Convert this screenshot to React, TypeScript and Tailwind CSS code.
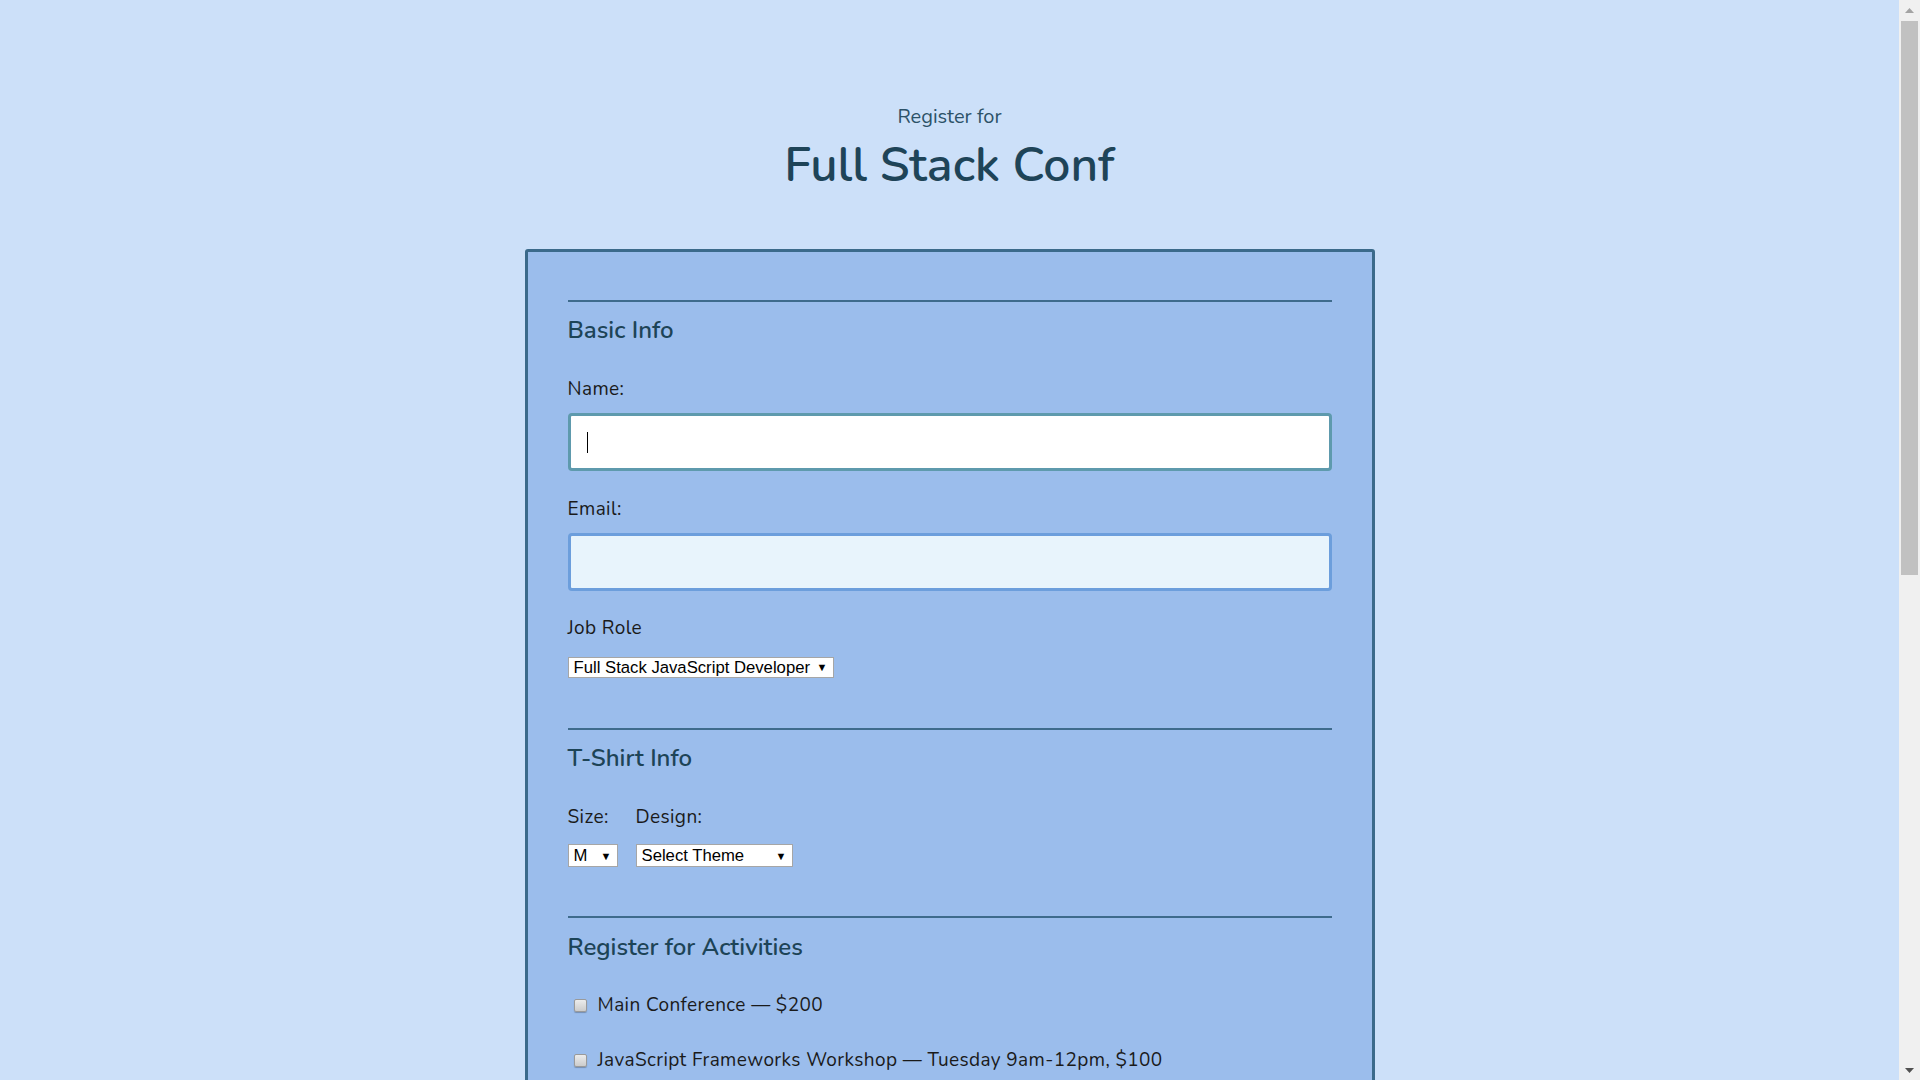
import React from "react";

const font = { fontFamily: '"Nunito", "Lato", "Open Sans", sans-serif' };

function Select({ width, options }: { width: string; options: string[] }) {
  return (
    <div className={`relative inline-block ${width}`}>
      <select
        className="appearance-none w-full h-full bg-white border border-[#a6a6a6] pl-[5px] pr-[16px] text-[16.7px] leading-[19px] text-black outline-none"
        style={{ fontFamily: '"Liberation Sans", Arial, sans-serif' }}
        defaultValue={options[0]}
      >
        {options.map((o) => (
          <option key={o}>{o}</option>
        ))}
      </select>
      {/* arrow glyph */}
      <span className="pointer-events-none absolute right-[6px] top-1/2 -translate-y-1/2 text-[11px] leading-none text-black">▼</span>
    </div>
  );
}

function Checkbox() {
  return (
    <span className="inline-block w-[13px] h-[13px] rounded-[2px] border border-[#9a9a9a] bg-gradient-to-b from-[#ececec] to-[#cccccc] shadow-[0_1px_1px_rgba(0,0,0,0.25)] shrink-0" />
  );
}

// fake window scrollbar, as in the screenshot
function Scrollbar() {
  return (
    <div className="fixed right-0 top-0 h-screen w-[21px] bg-[#f0f0f0] flex flex-col items-center">
      <div className="h-[20px] w-full flex items-center justify-center">
        <svg width="9" height="5" viewBox="0 0 9 5">
          <path d="M4.5 0 L9 5 L0 5 Z" fill="#a3a3a3" />
        </svg>
      </div>
      <div className="mt-px h-[554px] w-[17px] bg-[#c1c1c1]" />
      <div className="flex-1" />
      <div className="h-[20px] w-full flex items-center justify-center">
        <svg width="9" height="5" viewBox="0 0 9 5">
          <path d="M0 0 L9 0 L4.5 5 Z" fill="#505050" />
        </svg>
      </div>
    </div>
  );
}

const labelCls = "block text-[19px] leading-[24px] tracking-[0.4px] text-[#1a1a1a]";
const headCls = "text-[24px] leading-[30px] font-semibold text-[#1d4457]";
const hrCls = "border-0 border-t-2 border-[#3e6b8c]";

const activities = [
  "Main Conference — $200",
  "JavaScript Frameworks Workshop — Tuesday 9am-12pm, $100",
  "JavaScript Libraries Workshop — Tuesday 1pm-4pm, $100",
  "Express Workshop — Tuesday 9am-12pm, $100",
  "Node.js Workshop — Tuesday 1pm-4pm, $100",
  "Build tools Workshop — Wednesday 9am-12pm, $100",
  "npm Workshop — Wednesday 1pm-4pm, $100",
];

export default function App() {
  return (
    <div className="min-h-screen bg-[#cce0f9]" style={font}>
      <div className="mr-[21px] pb-[80px]">
        {/* Header */}
        <header className="pt-[105px] text-center text-[#1e4458]">
          <p className="text-[20px] leading-[24px] text-[#2c5268]">Register for</p>
          <h1 className="mt-[8px] text-[48px] leading-[56px] font-semibold">Full Stack Conf</h1>
        </header>

        {/* Form */}
        <form className="mx-auto mt-[56px] w-[850px] rounded-[3px] border-[3px] border-[#3b6a8b] bg-[#9bbdec] px-[40px] pt-[48px] pb-[60px]">
          {/* Basic Info */}
          <hr className={hrCls} />
          <h2 className={`mt-[13px] ${headCls}`}>Basic Info</h2>

          <label className={`mt-[32px] ${labelCls}`}>Name:</label>
          <div className="mt-[12px] h-[58px] rounded-[4px] border-[3px] border-[#5e9aad] bg-white flex items-center px-[16px]">
            <span className="w-px h-[21px] bg-black" />
          </div>

          <label className={`mt-[26px] ${labelCls}`}>Email:</label>
          <input
            type="email"
            className="mt-[12px] block w-full h-[58px] rounded-[4px] border-[3px] border-[#6c9edc] bg-[#e8f4fc] px-[16px] outline-none"
          />

          <label className={`mt-[25px] ${labelCls}`}>Job Role</label>
          <div className="mt-[16px] flex">
            <Select
              width="w-[266px] h-[21px]"
              options={["Full Stack JavaScript Developer", "Front End Developer", "Back End Developer", "Designer", "Student", "Other"]}
            />
          </div>

          {/* T-Shirt Info */}
          <hr className={`mt-[51px] ${hrCls}`} />
          <h2 className={`mt-[13px] ${headCls}`}>T-Shirt Info</h2>

          <div className="mt-[32px] flex gap-[18px]">
            <div className="flex flex-col">
              <label className={labelCls}>Size:</label>
              <div className="mt-[15px] flex">
                <Select width="w-[50px] h-[23px]" options={["M", "S", "L", "XL"]} />
              </div>
            </div>
            <div className="flex flex-col">
              <label className={labelCls}>Design:</label>
              <div className="mt-[15px] flex">
                <Select width="w-[157px] h-[23px]" options={["Select Theme", "Theme - JS Puns", "Theme - I ♥ JS"]} />
              </div>
            </div>
          </div>

          {/* Activities */}
          <hr className={`mt-[49px] ${hrCls}`} />
          <h2 className={`mt-[14px] ${headCls}`}>Register for Activities</h2>

          <div className="mt-[31px] flex flex-col gap-[31px]">
            {activities.map((a) => (
              <label key={a} className="flex items-center gap-[11px] pl-[6px] text-[19px] leading-[24px] tracking-[0.4px] text-[#1a1a1a]">
                <Checkbox />
                <span>{a}</span>
              </label>
            ))}
          </div>

          {/* Payment Info */}
          <hr className={`mt-[49px] ${hrCls}`} />
          <h2 className={`mt-[13px] ${headCls}`}>Payment Info</h2>

          <div className="mt-[32px] flex items-center gap-[14px]">
            <label className={labelCls}>I'm going to pay with:</label>
            <Select width="w-[215px] h-[21px]" options={["Select Payment Method", "Credit Card", "PayPal", "Bitcoin"]} />
          </div>

          <div className="mt-[30px] grid grid-cols-[1fr_160px_120px] gap-[18px]">
            <div>
              <label className={labelCls}>Card Number:</label>
              <input className="mt-[12px] block w-full h-[58px] rounded-[4px] border-[3px] border-[#6c9edc] bg-[#e8f4fc] outline-none" />
            </div>
            <div>
              <label className={labelCls}>Zip Code:</label>
              <input className="mt-[12px] block w-full h-[58px] rounded-[4px] border-[3px] border-[#6c9edc] bg-[#e8f4fc] outline-none" />
            </div>
            <div>
              <label className={labelCls}>CVV:</label>
              <input className="mt-[12px] block w-full h-[58px] rounded-[4px] border-[3px] border-[#6c9edc] bg-[#e8f4fc] outline-none" />
            </div>
          </div>

          <div className="mt-[26px] flex items-center gap-[14px]">
            <label className={labelCls}>Expiration Date:</label>
            <Select width="w-[140px] h-[21px]" options={["1 - January"]} />
            <label className={labelCls}>Expiration Year:</label>
            <Select width="w-[75px] h-[21px]" options={["2024"]} />
          </div>

          <button
            type="button"
            className="mt-[50px] rounded-[4px] bg-[#1d4457] px-[28px] py-[12px] text-[20px] leading-[24px] text-white"
          >
            Register
          </button>
        </form>
      </div>
      <Scrollbar />
    </div>
  );
}
